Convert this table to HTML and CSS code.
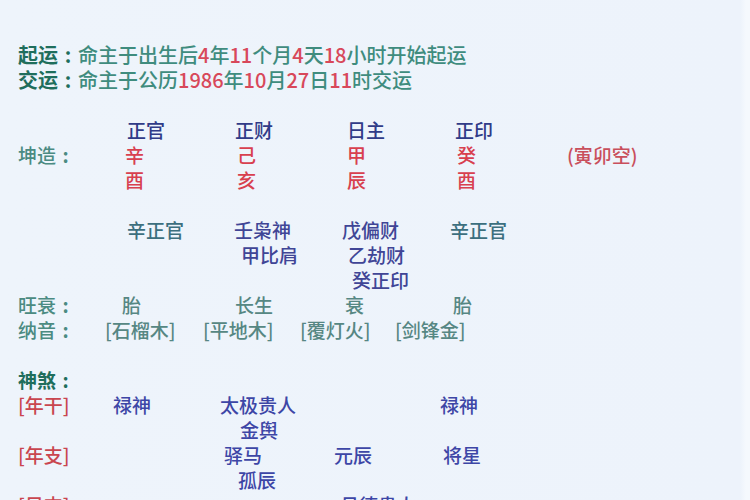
FILE: index.html
```html
<!DOCTYPE html>
<html lang="zh">
<head>
<meta charset="utf-8">
<link rel="stylesheet" href="styles.css">
</head>
<body>
<div class="page">
  <section class="yun">
    <div class="line"><span class="key">起运<span class="colon">:</span></span>命主于出生后<span class="num">4</span>年<span class="num">11</span>个月<span class="num">4</span>天<span class="num">18</span>小时开始起运</div>
    <div class="line"><span class="key">交运<span class="colon">:</span></span>命主于公历<span class="num">1986</span>年<span class="num">10</span>月<span class="num">27</span>日<span class="num">11</span>时交运</div>
  </section>

  <section class="block">
    <div class="row"><span></span><span class="god p5">正官</span><span class="god p5">正财</span><span class="god p5">日主</span><span class="god p5">正印</span></div>
    <div class="row"><span class="lab">坤造<span class="colon">:</span></span><span class="gz p3">辛</span><span class="gz p7">己</span><span class="gz p5">甲</span><span class="gz p7">癸</span><span class="gz kong p7">(寅卯空)</span></div>
    <div class="row"><span></span><span class="gz p3">酉</span><span class="gz p7">亥</span><span class="gz p5">辰</span><span class="gz p7">酉</span></div>
  </section>

  <section class="block">
    <div class="row"><span></span><span class="hid teal p5">辛正官</span><span class="hid p4">壬枭神</span><span class="hid p0">戊偏财</span><span class="hid teal p0">辛正官</span></div>
    <div class="row"><span></span><span></span><span class="hid p11">甲比肩</span><span class="hid p6">乙劫财</span></div>
    <div class="row"><span></span><span></span><span></span><span class="hid p10">癸正印</span></div>
    <div class="row"><span class="lab">旺衰<span class="colon">:</span></span><span class="val p0">胎</span><span class="val p5">长生</span><span class="val p3">衰</span><span class="val p3">胎</span></div>
    <div class="row nayin"><span class="lab">纳音<span class="colon">:</span></span><span class="val">[石榴木]</span><span class="val">[平地木]</span><span class="val">[覆灯火]</span><span class="val">[剑锋金]</span></div>
  </section>

  <section class="block">
    <div class="row"><span class="key">神煞<span class="colon">:</span></span></div>
    <div class="row ss"><span class="pillar">[年干]</span><span class="sha">禄神</span><span class="sha">太极贵人</span><span></span><span class="sha">禄神</span></div>
    <div class="row ss"><span></span><span></span><span class="sha p20">金舆</span></div>
    <div class="row ss"><span class="pillar">[年支]</span><span></span><span class="sha p4">驿马</span><span class="sha">元辰</span><span class="sha p3">将星</span></div>
    <div class="row ss"><span></span><span></span><span class="sha p18">孤辰</span></div>
    <div class="row ss"><span class="pillar">[日支]</span><span></span><span></span><span class="sha p6">月德贵人</span></div>
  </section>
</div>
</body>
</html>
```

FILE: styles.css
```css
html, body {
  margin: 0;
  padding: 0;
  background: #eef4fb;
}
body {
  width: 750px;
  height: 500px;
  overflow: hidden;
  font-family: "Noto Sans CJK SC", "Noto Sans", sans-serif;
  font-weight: 500;
}
.page {
  padding: 42px 0 0 18px;
  background: linear-gradient(90deg, #eef4fb 0, #edf3fb 740px, #f5f9fd 746px);
  height: 500px;
  box-sizing: border-box;
}
.colon {
  display: inline-block;
  width: 1em;
  text-align: center;
  font-weight: 700;
}
.yun {
  font-size: 20px;
  color: #3f8c7e;
  margin-bottom: 25px;
}
.line {
  height: 25px;
  line-height: 25px;
  white-space: nowrap;
}
.key {
  color: #1f6e5c;
  font-weight: 700;
}
.num {
  color: #d8485a;
}
.block {
  font-size: 19px;
  margin-bottom: 25px;
}
.row {
  display: grid;
  grid-template-columns: 104px 108px 112px 108px 110px auto;
  height: 25px;
  line-height: 25px;
  white-space: nowrap;
}
.row.nayin {
  grid-template-columns: 87px 98px 97px 95px auto;
}
.row.ss {
  grid-template-columns: 95px 107px 114px 106px auto;
}
.lab {
  color: #4b8b82;
}
.god {
  color: #303b88;
}
.gz {
  color: #d8404f;
}
.gz.kong {
  color: #c94f5c;
}
.hid {
  color: #404596;
}
.hid.teal {
  color: #3c6f7e;
}
.val {
  color: #568783;
}
.pillar {
  color: #c9464f;
}
.sha {
  color: #3d46a6;
}
.p0 { padding-left: 0; }
.p3 { padding-left: 3px; }
.p4 { padding-left: 4px; }
.p5 { padding-left: 5px; }
.p6 { padding-left: 6px; }
.p7 { padding-left: 7px; }
.p10 { padding-left: 10px; }
.p11 { padding-left: 11px; }
.p18 { padding-left: 18px; }
.p20 { padding-left: 20px; }
```
